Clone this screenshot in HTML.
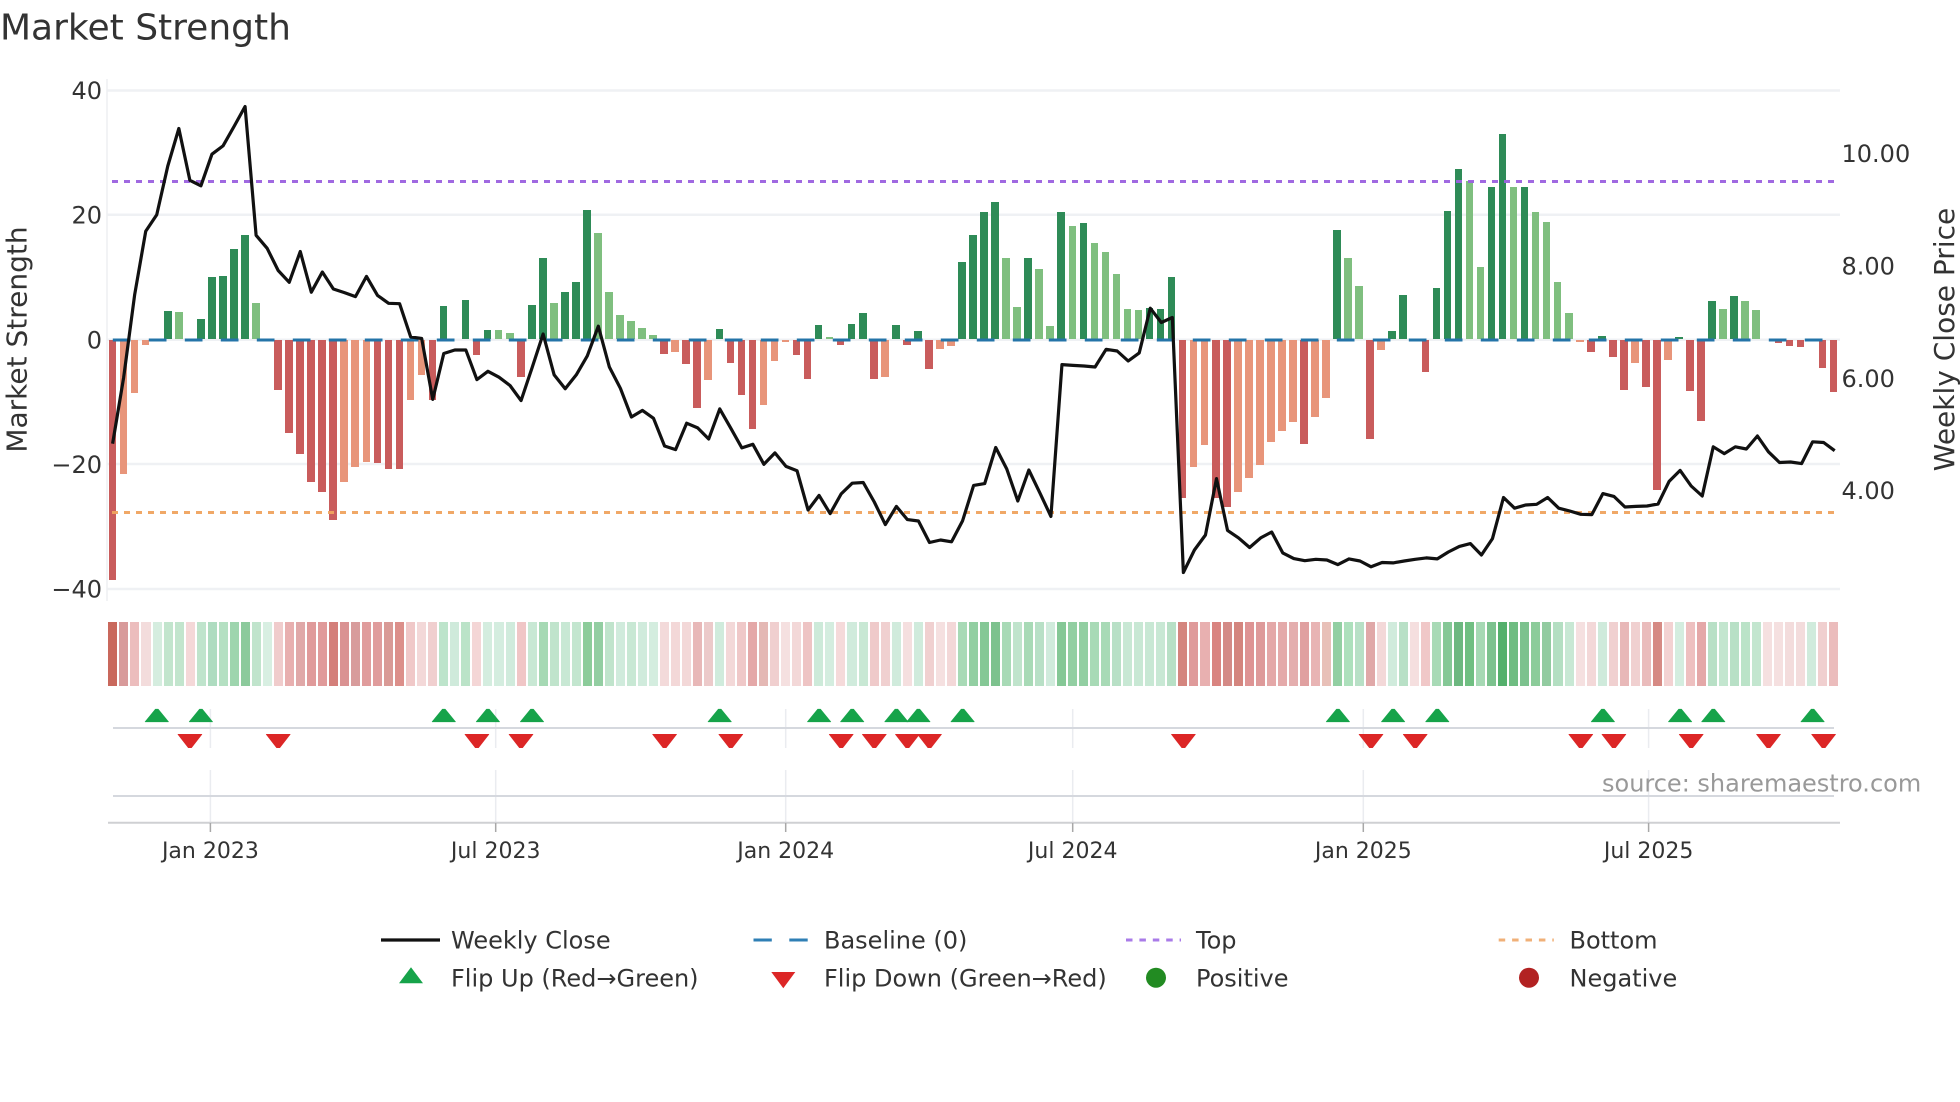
<!DOCTYPE html>
<html><head><meta charset="utf-8"><title>Market Strength</title>
<style>
html,body{margin:0;padding:0;background:#fff}
#p{position:relative;width:1960px;height:1102px;overflow:hidden;background:#fff;font-family:"DejaVu Sans","Liberation Sans",sans-serif;color:#333}
svg{position:absolute;left:0;top:0}
#b{position:absolute;left:107.08px;top:339.8px;height:0;display:flex;align-items:flex-start;z-index:2}
#b i{display:block;flex:none;width:7.6px;margin:0 1.7195px}
#b .g,#b .l{transform:translateY(-100%);margin-top:-.6px}
#b .r,#b .o{margin-top:.6px}
.r{background:#c95c5c}.o{background:#e8957a}.g{background:#2e8b57}.l{background:#7fbf7f}
#s{position:absolute;left:107.38px;top:622px;height:64px;display:flex}
#s i{display:block;flex:none;width:9.039px;margin:0 1px;height:64px}
</style></head><body><div id="p">
<svg width="1960" height="1102" style="z-index:1">
<g stroke="#eff1f4" stroke-width="2.5"><path d="M107 90.5H1840M107 214.7H1840M107 339.7H1840M107 464H1840M107 589H1840"/></g>
<path d="M107 79V601" stroke="#eeeff2" stroke-width="1.5"/>
<g stroke="#eaecf0" stroke-width="1.5"><path d="M210.4 709V748M210.4 770V823M495.7 709V748M495.7 770V823M785.7 709V748M785.7 770V823M1072.7 709V748M1072.7 770V823M1363.3 709V748M1363.3 770V823M1648.6 709V748M1648.6 770V823"/></g>
<g stroke="#d5d8de" stroke-width="2"><path d="M113 728H1834M113 796H1834"/></g>
<path d="M108 822.7H1840" stroke="#cfd0d3" stroke-width="2"/>
<g stroke="#a8a8a8" stroke-width="1.5"><path d="M210.4 823V832M495.7 823V832M785.7 823V832M1072.7 823V832M1363.3 823V832M1648.6 823V832"/></g>
<defs>
<path id="u" d="M-11.7 13L-1.4 .4L1.4 .4L11.7 13Z" fill="#16a34a" stroke="#16a34a" stroke-width=".6" stroke-linejoin="round"/>
<path id="d" d="M-12 0L12 0L1.6 13.4L-1.6 13.4Z" fill="#dc2626" stroke="#dc2626" stroke-width=".6" stroke-linejoin="round"/>
</defs>
<use href="#u" x="156.8" y="708.8"/><use href="#u" x="200.9" y="708.8"/><use href="#u" x="443.8" y="708.8"/><use href="#u" x="487.9" y="708.8"/><use href="#u" x="532" y="708.8"/><use href="#u" x="719.7" y="708.8"/><use href="#u" x="819.1" y="708.8"/><use href="#u" x="852.2" y="708.8"/><use href="#u" x="896.4" y="708.8"/><use href="#u" x="918.4" y="708.8"/><use href="#u" x="962.6" y="708.8"/><use href="#u" x="1337.9" y="708.8"/><use href="#u" x="1393.1" y="708.8"/><use href="#u" x="1437.3" y="708.8"/><use href="#u" x="1602.9" y="708.8"/><use href="#u" x="1680.1" y="708.8"/><use href="#u" x="1713.3" y="708.8"/><use href="#u" x="1812.6" y="708.8"/>
<use href="#d" x="189.9" y="734.3"/><use href="#d" x="278.2" y="734.3"/><use href="#d" x="476.9" y="734.3"/><use href="#d" x="521" y="734.3"/><use href="#d" x="664.6" y="734.3"/><use href="#d" x="730.8" y="734.3"/><use href="#d" x="841.2" y="734.3"/><use href="#d" x="874.3" y="734.3"/><use href="#d" x="907.4" y="734.3"/><use href="#d" x="929.5" y="734.3"/><use href="#d" x="1183.4" y="734.3"/><use href="#d" x="1371" y="734.3"/><use href="#d" x="1415.2" y="734.3"/><use href="#d" x="1580.8" y="734.3"/><use href="#d" x="1613.9" y="734.3"/><use href="#d" x="1691.2" y="734.3"/><use href="#d" x="1768.5" y="734.3"/><use href="#d" x="1823.6" y="734.3"/>
</svg>
<div id="b"><i class=r style=height:240px></i><i class=o style=height:134px></i><i class=o style=height:53px></i><i class=o style=height:5px></i><i></i><i class=g style=height:28px></i><i class=l style=height:27px></i><i></i><i class=g style=height:20px></i><i class=g style=height:62px></i><i class=g style=height:63px></i><i class=g style=height:90px></i><i class=g style=height:104px></i><i class=l style=height:36px></i><i></i><i class=r style=height:50px></i><i class=r style=height:93px></i><i class=r style=height:114px></i><i class=r style=height:142px></i><i class=r style=height:152px></i><i class=r style=height:180px></i><i class=o style=height:142px></i><i class=o style=height:127px></i><i class=o style=height:122px></i><i class=r style=height:123px></i><i class=r style=height:129px></i><i class=r style=height:129px></i><i class=o style=height:60px></i><i class=o style=height:35px></i><i class=r style=height:60px></i><i class=g style=height:33px></i><i></i><i class=g style=height:39px></i><i class=r style=height:15px></i><i class=g style=height:9px></i><i class=l style=height:9px></i><i class=l style=height:6px></i><i class=r style=height:37px></i><i class=g style=height:34px></i><i class=g style=height:81px></i><i class=l style=height:36px></i><i class=g style=height:47px></i><i class=g style=height:57px></i><i class=g style=height:129px></i><i class=l style=height:106px></i><i class=l style=height:47px></i><i class=l style=height:24px></i><i class=l style=height:18px></i><i class=l style=height:11px></i><i class=l style=height:4px></i><i class=r style=height:14px></i><i class=o style=height:12px></i><i class=r style=height:24px></i><i class=r style=height:68px></i><i class=o style=height:40px></i><i class=g style=height:10px></i><i class=r style=height:23px></i><i class=r style=height:55px></i><i class=r style=height:89px></i><i class=o style=height:65px></i><i class=o style=height:21px></i><i class=o style=height:2px></i><i class=r style=height:15px></i><i class=r style=height:39px></i><i class=g style=height:14px></i><i class=l style=height:2px></i><i class=r style=height:5px></i><i class=g style=height:15px></i><i class=g style=height:26px></i><i class=r style=height:39px></i><i class=o style=height:37px></i><i class=g style=height:14px></i><i class=r style=height:5px></i><i class=g style=height:8px></i><i class=r style=height:29px></i><i class=o style=height:9px></i><i class=o style=height:6px></i><i class=g style=height:77px></i><i class=g style=height:104px></i><i class=g style=height:127px></i><i class=g style=height:137px></i><i class=l style=height:81px></i><i class=l style=height:32px></i><i class=g style=height:81px></i><i class=l style=height:70px></i><i class=l style=height:13px></i><i class=g style=height:127px></i><i class=l style=height:113px></i><i class=g style=height:116px></i><i class=l style=height:96px></i><i class=l style=height:87px></i><i class=l style=height:65px></i><i class=l style=height:30px></i><i class=l style=height:29px></i><i class=g style=height:31px></i><i class=g style=height:30px></i><i class=g style=height:62px></i><i class=r style=height:158px></i><i class=o style=height:127px></i><i class=o style=height:105px></i><i class=r style=height:158px></i><i class=r style=height:167px></i><i class=o style=height:152px></i><i class=o style=height:138px></i><i class=o style=height:125px></i><i class=o style=height:102px></i><i class=o style=height:91px></i><i class=o style=height:82px></i><i class=r style=height:104px></i><i class=o style=height:77px></i><i class=o style=height:58px></i><i class=g style=height:109px></i><i class=l style=height:81px></i><i class=l style=height:53px></i><i class=r style=height:99px></i><i class=o style=height:10px></i><i class=g style=height:8px></i><i class=g style=height:44px></i><i></i><i class=r style=height:32px></i><i class=g style=height:51px></i><i class=g style=height:128px></i><i class=g style=height:170px></i><i class=l style=height:158px></i><i class=l style=height:72px></i><i class=g style=height:152px></i><i class=g style=height:205px></i><i class=l style=height:152px></i><i class=g style=height:152px></i><i class=l style=height:127px></i><i class=l style=height:117px></i><i class=l style=height:57px></i><i class=l style=height:26px></i><i class=o style=height:2px></i><i class=r style=height:12px></i><i class=g style=height:3px></i><i class=r style=height:17px></i><i class=r style=height:50px></i><i class=o style=height:23px></i><i class=r style=height:47px></i><i class=r style=height:150px></i><i class=o style=height:20px></i><i class=g style=height:2px></i><i class=r style=height:51px></i><i class=r style=height:81px></i><i class=g style=height:38px></i><i class=l style=height:30px></i><i class=g style=height:43px></i><i class=l style=height:38px></i><i class=l style=height:29px></i><i></i><i class=r style=height:3px></i><i class=r style=height:6px></i><i class=r style=height:7px></i><i></i><i class=r style=height:28px></i><i class=r style=height:52px></i></div>
<div id="s"><i style=background:#c9685c></i><i style=background:#d89a9a></i><i style=background:#ecbdbd></i><i style=background:#f3dcdc></i><i style=background:#d5eddf></i><i style=background:#c2e5cd></i><i style=background:#c2e5cd></i><i style=background:#f4d8d8></i><i style=background:#bfe4cc></i><i style=background:#aedcc0></i><i style=background:#b4e0c2></i><i style=background:#9ed5ae></i><i style=background:#8cca9c></i><i style=background:#c0e4cc></i><i style=background:#d8efe2></i><i style=background:#f0cccc></i><i style=background:#e8afaf></i><i style=background:#e0a8a8></i><i style=background:#e09a9a></i><i style=background:#e09a9a></i><i style=background:#d47f7a></i><i style=background:#da9292></i><i style=background:#d89c9c></i><i style=background:#e09c9c></i><i style=background:#e09c9c></i><i style=background:#d99a96></i><i style=background:#dc8f8a></i><i style=background:#f0c8c8></i><i style=background:#f3d8d8></i><i style=background:#f0cfcf></i><i style=background:#bde4cb></i><i style=background:#cfeadb></i><i style=background:#bbe3c8></i><i style=background:#f4d6d6></i><i style=background:#d4eddf></i><i style=background:#d4eddf></i><i style=background:#d0ebdc></i><i style=background:#f0c6c6></i><i style=background:#c8e8d4></i><i style=background:#a6d9b4></i><i style=background:#c0e4cc></i><i style=background:#c8e8d4></i><i style=background:#c3e6cf></i><i style=background:#8ccc9a></i><i style=background:#93cea2></i><i style=background:#c0e4cc></i><i style=background:#d0ebdc></i><i style=background:#c8e8d4></i><i style=background:#d0ebdc></i><i style=background:#d4eddf></i><i style=background:#f3dada></i><i style=background:#f3d8d8></i><i style=background:#f3d8d8></i><i style=background:#e8b8b8></i><i style=background:#eccaca></i><i style=background:#d0ebdc></i><i style=background:#f3d8d8></i><i style=background:#efc8c8></i><i style=background:#e4a8a8></i><i style=background:#e4b8b4></i><i style=background:#f0cfcf></i><i style=background:#f5e0e0></i><i style=background:#f3d8d8></i><i style=background:#eec4c4></i><i style=background:#cdead9></i><i style=background:#d4eddf></i><i style=background:#f5dada></i><i style=background:#d0ebdc></i><i style=background:#c8e8d4></i><i style=background:#efcaca></i><i style=background:#f0d0d0></i><i style=background:#d0ebdc></i><i style=background:#f5dfdf></i><i style=background:#d0ebdc></i><i style=background:#f0d0d0></i><i style=background:#f5e0e0></i><i style=background:#f3d8d8></i><i style=background:#a8dab6></i><i style=background:#92cfa2></i><i style=background:#85c896></i><i style=background:#7dc28e></i><i style=background:#a8dab6></i><i style=background:#c0e4cc></i><i style=background:#a8dab6></i><i style=background:#b8e0c6></i><i style=background:#d0ebdc></i><i style=background:#85c896></i><i style=background:#92cfa2></i><i style=background:#92cfa2></i><i style=background:#a8dab6></i><i style=background:#a8dab6></i><i style=background:#b8e0c6></i><i style=background:#c8e8d4></i><i style=background:#c8e8d4></i><i style=background:#c8e8d4></i><i style=background:#c8e8d4></i><i style=background:#b8e0c6></i><i style=background:#d4857e></i><i style=background:#df9a9a></i><i style=background:#e8b0b0></i><i style=background:#d98480></i><i style=background:#d48a86></i><i style=background:#d4857e></i><i style=background:#de9494></i><i style=background:#de9a9a></i><i style=background:#e4a8a8></i><i style=background:#e4aaaa></i><i style=background:#e4aeae></i><i style=background:#e0a0a0></i><i style=background:#e8b4b4></i><i style=background:#e8c0b8></i><i style=background:#92cfa2></i><i style=background:#ade0bc></i><i style=background:#b8e0c6></i><i style=background:#e0a8a8></i><i style=background:#f3d8d8></i><i style=background:#d0ebdc></i><i style=background:#b8e0c6></i><i style=background:#f5dfdf></i><i style=background:#f0c8c8></i><i style=background:#a8dab6></i><i style=background:#85c896></i><i style=background:#6db880></i><i style=background:#70bf82></i><i style=background:#a6d9b4></i><i style=background:#7cc28e></i><i style=background:#54b06c></i><i style=background:#6fbd82></i><i style=background:#7cc28e></i><i style=background:#8ccc9a></i><i style=background:#92cba0></i><i style=background:#b4dfc2></i><i style=background:#c8e8d4></i><i style=background:#f5e0e0></i><i style=background:#f3d8d8></i><i style=background:#cfeadb></i><i style=background:#f0d0d0></i><i style=background:#e8b8b8></i><i style=background:#f0d0d0></i><i style=background:#eabcbc></i><i style=background:#d68a84></i><i style=background:#f3d2d2></i><i style=background:#d4eddf></i><i style=background:#eec0c0></i><i style=background:#e4a8a8></i><i style=background:#b8e0c6></i><i style=background:#c3e6cf></i><i style=background:#b8e0c6></i><i style=background:#bbe3c8></i><i style=background:#c3e6cf></i><i style=background:#f5e0e0></i><i style=background:#f5e0e0></i><i style=background:#f3dcdc></i><i style=background:#f3dcdc></i><i style=background:#d0ebdc></i><i style=background:#f0cfcf></i><i style=background:#ebbcbc></i></div>
<svg width="1960" height="1102" style="z-index:3">
<path d="M112 181.5H1836" stroke="#9b62e0" stroke-width="3" stroke-dasharray="6 6" opacity=".95"/>
<path d="M112 512.5H1836" stroke="#f0a45f" stroke-width="3" stroke-dasharray="6 6" opacity=".95"/>
<path d="M112.8 340H1834" stroke="#2474a8" stroke-width="3" stroke-dasharray="17.7 18.3"/>
<polyline transform="translate(112.6,0) scale(11.039,1)" fill="none" stroke="#111" stroke-width="3.2" stroke-linejoin="round" vector-effect="non-scaling-stroke" points="0,443.7 1,377.6 2,294.6 3,231.3 4,214.7 5,166 6,128.5 7,180.3 8,185.8 9,154.2 10,145.9 11,126.5 12,106.5 13,235.3 14,248.3 15,270.5 16,282.3 17,251.5 18,292.2 19,272 20,289 21,292.6 22,296.6 23,276.4 24,295.4 25,303.3 26,303.7 27,336.9 28,338.5 29,399.4 30,353.5 31,350 32,350 33,379.6 34,371.3 35,377.2 36,385.5 37,400.6 38,367.7 39,334 40,374.9 41,388.7 42,374.9 43,355.9 44,326.2 45,367 46,388.3 47,417 48,410.4 49,418.3 50,446 51,449.6 52,423.2 53,427.9 54,439 55,408.9 56,428.2 57,447.9 58,444.3 59,464.3 60,452.9 61,466.4 62,470.7 63,510 64,495.4 65,513.6 66,493.9 67,483.2 68,482.5 69,502 70,524.6 71,506.4 72,519.6 73,521 74,542.5 75,540 76,541.8 77,520.7 78,485.4 79,483.6 80,447.5 81,469 82,501 83,470 84,492.9 85,516.4 86,364.6 87,365.4 88,366 89,367 90,349.3 91,351 92,361 93,352.9 94,308.2 95,322.5 96,317.5 97,572.5 98,550 99,535 100,478.6 101,530.4 102,537.9 103,547.5 104,537.9 105,532 106,552.9 107,558.6 108,560.7 109,559.3 110,560 111,564.6 112,558.9 113,561 114,566.8 115,562.5 116,562.9 117,561 118,559.3 119,557.9 120,558.9 121,552 122,546.4 123,543.6 124,555 125,538.6 126,497.5 127,508.2 128,505 129,504.3 130,497.5 131,508.2 132,511 133,514.3 134,514.6 135,493.6 136,496.4 137,507 138,506.4 139,506 140,504 141,481.4 142,470.4 143,486 144,496 145,446.8 146,453.6 147,446.8 148,449 149,436 150,451.8 151,462.5 152,462 153,463.6 154,441.8 155,442.5 156,450.7"/>
<g fill="#333" font-family="'DejaVu Sans','Liberation Sans',sans-serif">
<text x="0" y="39.5" font-size="36">Market Strength</text>
<g font-size="24" text-anchor="end"><text x="102" y="99.2">40</text><text x="102" y="223.4">20</text><text x="102" y="348.4">0</text><text x="102" y="472.8">−20</text><text x="102" y="597.4">−40</text></g>
<g font-size="24"><text x="1841.5" y="162">10.00</text><text x="1841.5" y="274.5">8.00</text><text x="1841.5" y="387">6.00</text><text x="1841.5" y="499">4.00</text></g>
<text transform="translate(26.5,339.5) rotate(-90)" text-anchor="middle" font-size="28">Market Strength</text>
<text transform="translate(1954,339.5) rotate(-90)" text-anchor="middle" font-size="28">Weekly Close Price</text>
<g font-size="22" text-anchor="middle"><text x="210.4" y="858">Jan 2023</text><text x="495.7" y="858">Jul 2023</text><text x="785.7" y="858">Jan 2024</text><text x="1072.7" y="858">Jul 2024</text><text x="1363.3" y="858">Jan 2025</text><text x="1648.6" y="858">Jul 2025</text></g>
<text x="1602" y="791.7" font-size="24" fill="#999">source: sharemaestro.com</text>
<g font-size="24"><text x="451" y="948.3">Weekly Close</text><text x="824" y="948.3">Baseline (0)</text><text x="1196" y="948.3">Top</text><text x="1569.5" y="948.3">Bottom</text><text x="451" y="986.7">Flip Up (Red→Green)</text><text x="824" y="986.7">Flip Down (Green→Red)</text><text x="1196" y="986.7">Positive</text><text x="1569.5" y="986.7">Negative</text></g>
</g>
<path d="M381 940H440" stroke="#111" stroke-width="3.2"/>
<path d="M753.5 940H771.8M789.3 940H807.7" stroke="#2f7fb5" stroke-width="3"/>
<path d="M1126 940H1181" stroke="#a97be8" stroke-width="3" stroke-dasharray="6.5 6.9"/>
<path d="M1498.7 940H1553.8" stroke="#f0b078" stroke-width="3" stroke-dasharray="6.5 6.9"/>
<path d="M399 983.3L411 967.3L423 983.3Z" fill="#16a34a"/>
<path d="M771.3 972H795.3L783.3 988.3Z" fill="#dc2626"/>
<circle cx="1156" cy="977.7" r="10" fill="#228b22"/>
<circle cx="1529" cy="977.7" r="10" fill="#b22222"/>
</svg>
</div></body></html>
